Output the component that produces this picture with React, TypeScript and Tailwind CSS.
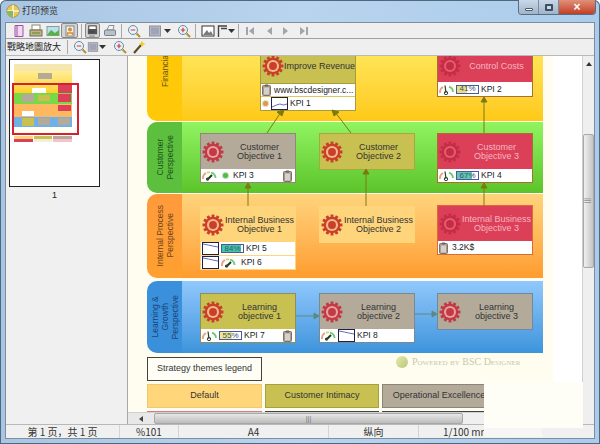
import type { ReactNode } from 'react';

const SANS = 'font-["Liberation_Sans",Arial,sans-serif]';

function Gear({ tone = 'orange' }: { tone?: 'orange' | 'crimson' | 'red' }) {
  const main = tone === 'orange' ? '#c8402a' : tone === 'crimson' ? '#c23a44' : '#c42e44';
  const ring = tone === 'orange' ? '#f7b98a' : tone === 'crimson' ? '#e8a0a0' : '#e85a70';
  const teeth = Array.from({ length: 12 }, (_, i) => i * 30);
  return (
    <svg width="22" height="22" viewBox="0 0 24 24" className="shrink-0">
      {teeth.map((a) => (
        <rect key={a} x="10.4" y="0.6" width="3.2" height="5" fill={main} transform={`rotate(${a} 12 12)`} />
      ))}
      <circle cx="12" cy="12" r="9" fill={main} />
      <circle cx="12" cy="12" r="6.6" fill={ring} />
      <circle cx="12" cy="12" r="4.3" fill={main} />
    </svg>
  );
}

function Clip() {
  return (
    <svg width="9" height="12" viewBox="0 0 9 12" className="shrink-0">
      <rect x="0.5" y="1.5" width="8" height="10" rx="1" fill="#a89c90" stroke="#7c7468" />
      <rect x="2" y="3.5" width="5" height="7" fill="#d8d0c8" />
      <rect x="3" y="0.5" width="3" height="2" fill="#6c6458" />
    </svg>
  );
}

function Gauge() {
  return (
    <svg width="15" height="11" viewBox="0 0 15 11" className="shrink-0">
      <path d="M1 9 A6 6 0 0 1 4 3" fill="none" stroke="#e8a080" strokeWidth="1.8" />
      <path d="M5 2.6 A6 6 0 0 1 8 2.4" fill="none" stroke="#d8d060" strokeWidth="1.8" />
      <path d="M9 2.6 A6 6 0 0 1 13.6 8" fill="none" stroke="#70c870" strokeWidth="1.8" />
      <path d="M5 10 L10 5" stroke="#1c3a20" strokeWidth="2" />
      <circle cx="5.5" cy="9" r="1.6" fill="#2c4a30" />
    </svg>
  );
}

function Needle() {
  return (
    <svg width="15" height="11" viewBox="0 0 15 11" className="shrink-0">
      <path d="M1 9 A6 6 0 0 1 4 3" fill="none" stroke="#e8a080" strokeWidth="1.8" />
      <path d="M10 2.6 A6 6 0 0 1 14 8" fill="none" stroke="#70c870" strokeWidth="1.8" />
      <path d="M7 9 L6 1.5" stroke="#2c3a20" strokeWidth="1.2" />
      <circle cx="7" cy="9" r="1.7" fill="none" stroke="#2c4a30" />
    </svg>
  );
}

function Dot({ color }: { color: string }) {
  return <span className={`size-[7px] shrink-0 rounded-full border border-white/60 ${color}`} />;
}

function Spark({ w = 'w-[17px]', down = false }: { w?: string; down?: boolean }) {
  return (
    <span className={`block h-[13px] shrink-0 border border-[#20204a] bg-white ${w}`}>
      <svg viewBox="0 0 17 11" preserveAspectRatio="none" className="size-full">
        <path
          d={down ? 'M0 1 L6 2 L11 3 L17 4' : 'M0 9 L5 7 L9 6 L13 7 L17 6'}
          fill="none"
          stroke="#5a60b8"
          strokeWidth="1"
        />
      </svg>
    </span>
  );
}

function Pct({ v, fill }: { v: string; fill: string }) {
  return (
    <span className="relative flex h-[9px] w-[23px] shrink-0 items-center justify-center border border-[#4a58a0] bg-white text-[8px] leading-none text-[#40506a]">
      <span className={`absolute inset-y-0 left-0 ${fill}`} />
      <span className="relative">{v}</span>
    </span>
  );
}

function Row({ children, h = 'h-[13px]' }: { children: ReactNode; h?: string }) {
  return (
    <div className={`flex items-center gap-[2px] bg-white pl-[1px] text-[8.5px] text-[#222] ${h}`}>{children}</div>
  );
}

function Node({
  place,
  tone,
  gear = 'orange',
  title,
  children,
  border,
  head = 'h-[35px]',
}: {
  place: string;
  tone: string;
  gear?: 'orange' | 'crimson' | 'red';
  title: ReactNode;
  children?: ReactNode;
  border: string;
  head?: string;
}) {
  return (
    <div className={`absolute w-[96px] border ${place} ${border}`}>
      <div className={`flex pl-[1px] ${head} ${tone}`}>
        <div className="flex h-full max-h-[35px] items-center">
          <Gear tone={gear} />
        </div>
        <div className="flex h-full max-h-[35px] flex-1 items-center justify-center text-center text-[9px] leading-[9px] whitespace-nowrap">
          <span>{title}</span>
        </div>
      </div>
      {children}
    </div>
  );
}

function Lane({
  h,
  tab,
  body,
  title,
  label = '',
  children,
}: {
  h: string;
  tab: string;
  body: string;
  title: ReactNode;
  label?: string;
  children?: ReactNode;
}) {
  return (
    <div className={`relative flex w-[396px] overflow-hidden ${h}`}>
      <div className={`flex w-[35px] shrink-0 items-center justify-center ${tab}`}>
        <div className={`rotate-180 text-center text-[8.5px] leading-[10px] [writing-mode:vertical-rl] ${label}`}>{title}</div>
      </div>
      <div className={`flex-1 ${body}`} />
      {children}
    </div>
  );
}

function Diagram() {
  const RED = 'bg-[#dc3f58] text-[#f6b6c0]';
  const OLIVE = 'bg-[#c9c052] text-[#333]';
  const TAUPE = 'bg-[#b4aa9a] text-[#333]';
  const PEACH = 'bg-[#ffd57c] text-[#333]';
  return (
    <div className="relative flex w-[396px] flex-col gap-[1px]">
      <Lane
        h="h-[65px] rounded-bl-[10px]"
        tab="bg-[#ffc808] !items-start"
        label="text-[#6a5210] mt-[-3px]"
        body="bg-gradient-to-b from-[#ffe454] to-[#ffc912]"
        title="Financial"
      >
        <Node
          place="left-[113px] top-[-2px]"
          head="h-[28px] [&>div]:h-[22px]"
          tone={OLIVE}
          border="border-[#a89a40]"
          title="Improve Revenue"
        >
          <Row h="h-[13px] border-t border-[#a89a40]"><Clip /><span className="ml-[1px] whitespace-nowrap">www.bscdesigner.c...</span></Row>
          <Row h="h-[14px] border-t border-[#d8c860]"><Dot color="bg-[#d89a50]" /><Spark /><span>KPI 1</span></Row>
        </Node>
        <Node
          place="left-[290px] top-[-2px]"
          head="h-[27px] [&>div]:h-[22px]"
          tone={RED}
          gear="red"
          border="border-[#a8702c]"
          title="Control Costs"
        >
          <Row h="h-[14px]"><Needle /><Pct v="41%" fill="w-[10px] bg-[#e8e080]" /><span>KPI 2</span></Row>
        </Node>
      </Lane>
      <Lane
        h="h-[71px] rounded-l-[10px]"
        tab="bg-[#5cbf3e]"
        label="text-[#1c541c]"
        body="bg-gradient-to-b from-[#90f460] to-[#5cc42a]"
        title={<>Customer<br />Perspective</>}
      >
        <Node place="left-[53px] top-[11px]" tone={TAUPE} gear="crimson" border="border-[#908878]" title={<>Customer<br />Objective 1</>}>
          <Row><Gauge /><span className="w-[1px]" /><Dot color="bg-[#58b848]" /><span className="ml-[2px] flex-1">KPI 3</span><Clip /><span className="w-[1px]" /></Row>
        </Node>
        <Node place="left-[172px] top-[11px]" tone={OLIVE} border="border-[#a8a840]" title={<>Customer<br />Objective 2</>} />
        <Node place="left-[290px] top-[11px]" tone={RED} gear="red" border="border-[#a8702c]" title={<>Customer<br />Objective 3</>}>
          <Row><Needle /><Pct v="67%" fill="w-[15px] bg-[#60c8b0]" /><span>KPI 4</span></Row>
        </Node>
      </Lane>
      <Lane
        h="h-[84px] rounded-l-[10px]"
        tab="bg-gradient-to-b from-[#ff9a3c] to-[#ffa030]"
        label="text-[#6c4418]"
        body="bg-gradient-to-b from-[#ffd47c] to-[#ff9c2c]"
        title={<>Internal Process<br />Perspective</>}
      >
        <Node place="left-[53px] top-[12px]" tone={PEACH} border="border-[#ffd57c]" title={<>Internal Business<br />Objective 1</>}>
          <Row><Spark down /><Pct v="84%" fill="w-[19px] bg-[#40c8a8]" /><span>KPI 5</span></Row>
          <div className="h-[1px] bg-[#ffd57c]" />
          <Row><Spark down /><Gauge /><span className="ml-[3px]">KPI 6</span></Row>
        </Node>
        <Node place="left-[172px] top-[12px]" tone={PEACH} border="border-[#ffd57c]" title={<>Internal Business<br />Objective 2</>} />
        <Node place="left-[290px] top-[11px]" tone={RED} gear="red" border="border-[#d86a3c]" title={<>Internal Business<br />Objective 3</>}>
          <Row><Clip /><span className="ml-[2px]">3.2K$</span></Row>
        </Node>
      </Lane>
      <div className="h-[1px]" />
      <Lane
        h="h-[72px] rounded-l-[10px]"
        tab="bg-[#3a90da]"
        label="text-[#1c4478]"
        body="bg-gradient-to-b from-[#90c8fc] to-[#3c94dc]"
        title={<>Learning &amp;<br />Growth<br />Perspective</>}
      >
        <Node place="left-[53px] top-[12px]" tone={OLIVE} border="border-[#8c9060]" title={<>Learning<br />objective 1</>}>
          <Row><Needle /><Pct v="55%" fill="w-[12px] bg-[#f0e890]" /><span className="flex-1">KPI 7</span><Clip /><span className="w-[1px]" /></Row>
        </Node>
        <Node place="left-[172px] top-[12px]" tone={TAUPE} gear="crimson" border="border-[#7c8890]" title={<>Learning<br />objective 2</>}>
          <Row><Gauge /><Spark down /><span>KPI 8</span></Row>
        </Node>
        <Node place="left-[290px] top-[12px]" tone={TAUPE} gear="crimson" border="border-[#6c8aa0]" title={<>Learning<br />objective 3</>} />
      </Lane>
      <svg viewBox="0 0 396 296" className="pointer-events-none absolute left-0 top-0 h-[296px] w-[396px]">
        <g stroke="#7c7a10" strokeWidth="1" fill="#7c7a10">
          <path d="M120 77 L134 56" /><path d="M137 54 L130 56 L135 60 Z" />
          <path d="M204 77 L188 56" /><path d="M185 54 L192 56 L187 60 Z" />
          <path d="M337 77 L337 44" /><path d="M337 41 L334 46 L340 46 Z" />
          <path d="M101 150 L101 130" /><path d="M101 127 L98 132 L104 132 Z" />
          <path d="M219 150 L219 116" /><path d="M219 113 L216 118 L222 118 Z" />
          <path d="M337 150 L337 130" /><path d="M337 127 L334 132 L340 132 Z" />
        </g>
        <g stroke="#5c8a80" strokeWidth="1" fill="#5c8a80">
          <path d="M149 260 L168 260" /><path d="M172 260 L167 257 L167 263 Z" />
          <path d="M267 258 L286 258" /><path d="M290 258 L285 255 L285 261 Z" />
        </g>
      </svg>
    </div>
  );
}

function Legend() {
  const cell = 'flex h-[24px] items-center justify-center text-[9px] text-[#333] border';
  return (
    <div className="mt-[4px] flex w-[396px] flex-col gap-[3px]">
      <div className={`${cell} w-[115px] border-[#44443c] bg-[#fffef6]`}>Strategy themes legend</div>
      <div className="flex gap-[3px]">
        <div className={`${cell} w-[115px] border-[#f0c870] bg-[#ffd77a]`}>Default</div>
        <div className={`${cell} w-[114px] border-[#a8a040] bg-[#c9c052]`}>Customer Intimacy</div>
        <div className={`${cell} w-[114px] border-[#8c8474] bg-[#b4aa9a]`}>Operational Excellence</div>
      </div>
      <div className="flex gap-[3px]">
        <div className="h-[24px] w-[115px] bg-[#d87888]" />
        <div className="h-[24px] w-[114px] border-t border-[#444] bg-[#eee]" />
        <div className="h-[24px] w-[114px] border-t border-[#444] bg-[#eee]" />
      </div>
    </div>
  );
}

function Thumb() {
  return (
    <div className="relative h-[128px] w-[91px] border border-[#222] bg-white pl-[4px] pt-[4px]">
      <div className="flex w-[58px] flex-col">
        <div className="h-[7px] bg-[#f4e8b0]" />
        <div className="relative h-[22px] bg-gradient-to-b from-[#ffee90] to-[#ffd020]">
          <span className="absolute left-[24px] top-[2px] h-[6px] w-[14px] bg-[#b4aa9a]" />
          <span className="absolute left-[18px] top-[17px] h-[5px] w-[14px] bg-white" />
          <span className="absolute left-[44px] top-[14px] h-[8px] w-[14px] bg-[#dc3f58]" />
        </div>
        <div className="relative h-[11px] bg-[#78d848]">
          <span className="absolute left-[8px] top-[1px] h-[8px] w-[12px] bg-[#b4aa9a]" />
          <span className="absolute left-[24px] top-[2px] h-[6px] w-[12px] bg-[#c9c052]" />
          <span className="absolute left-[44px] top-[1px] h-[8px] w-[13px] bg-[#dc3f58]" />
        </div>
        <div className="relative h-[13px] bg-[#ffb860]">
          <span className="absolute left-[8px] top-[7px] h-[5px] w-[12px] bg-white" />
          <span className="absolute left-[44px] top-[1px] h-[6px] w-[13px] bg-[#dc3f58]" />
        </div>
        <div className="relative h-[10px] bg-[#70b0e8]">
          <span className="absolute left-[8px] top-[1px] h-[8px] w-[12px] bg-[#c9c052]" />
          <span className="absolute left-[24px] top-[1px] h-[7px] w-[12px] bg-[#b4aa9a]" />
          <span className="absolute left-[44px] top-[1px] h-[7px] w-[12px] bg-[#b4aa9a]" />
        </div>
        <div className="h-[9px] bg-[#fffef0]" />
        <div className="flex h-[3px] gap-[1px]">
          <span className="flex-1 bg-[#ffd77a]" /><span className="flex-1 bg-[#c9c052]" /><span className="flex-1 bg-[#b4aa9a]" />
        </div>
        <div className="flex h-[3px] gap-[1px]">
          <span className="flex-1 bg-[#dc3f58]" /><span className="flex-1 bg-[#f0f0d8]" /><span className="flex-1 bg-[#f8c0c8]" />
        </div>
      </div>
      <div className="absolute left-[2px] top-[23px] h-[52px] w-[67px] border-2 border-[#d42030]" />
    </div>
  );
}

function Sep() {
  return <span className="mx-[3px] h-[14px] w-[1px] bg-[#a8a8a8]" />;
}

function Tool({ children, on = false, w = 'w-[17px]' }: { children: ReactNode; on?: boolean; w?: string }) {
  return (
    <span className={`flex h-[15px] shrink-0 items-center justify-center rounded-[2px] ${w} ${on ? 'border border-[#8a8a8a] bg-[#d4d4d4]' : ''}`}>
      {children}
    </span>
  );
}

function Ico({ children, w = 14 }: { children: ReactNode; w?: number }) {
  return (
    <svg width={w} height="14" viewBox={`0 0 ${w} 14`}>
      {children}
    </svg>
  );
}

function Zoom({ plus = false }: { plus?: boolean }) {
  return (
    <Ico>
      <circle cx="6" cy="6" r="4.5" fill="#e8f0f8" stroke="#6a8aa8" />
      <path d="M3.8 6 H8.2" stroke="#c84030" strokeWidth="1.2" />
      {plus && <path d="M6 3.8 V8.2" stroke="#c84030" strokeWidth="1.2" />}
      <path d="M9.5 9.5 L13 13" stroke="#b8902c" strokeWidth="2" />
    </Ico>
  );
}

function Square() {
  return (
    <Ico>
      <rect x="1.5" y="2" width="11" height="10" fill="#b8bcc8" stroke="#8c90a0" />
      <rect x="3" y="3.5" width="8" height="7" fill="#a0a4b4" />
    </Ico>
  );
}

function Caret() {
  return (
    <svg width="7" height="4" viewBox="0 0 7 4" className="shrink-0">
      <path d="M0 0 H7 L3.5 4 Z" fill="#333" />
    </svg>
  );
}

function Nav({ d, bar }: { d: string; bar?: number }) {
  return (
    <Ico w={10}>
      {bar !== undefined && <rect x={bar} y="3" width="2" height="8" fill="#a0a4ac" />}
      <path d={d} fill="#a0a4ac" />
    </Ico>
  );
}

function ToolbarTop() {
  return (
    <div className="flex h-[16px] items-center border-b border-[#a0a0a0] bg-[#efefef] pl-[4px]">
      <Tool>
        <Ico><path d="M3 1.5 H11 V12.5 H3 Z" fill="#f0d8f0" stroke="#a050a8" /><path d="M5 1.5 V12.5" stroke="#a050a8" /></Ico>
      </Tool>
      <Tool>
        <Ico><rect x="3" y="1" width="8" height="5" fill="#fff" stroke="#8a8a70" /><rect x="1" y="6" width="12" height="6" fill="#c8b078" stroke="#68705c" /><path d="M3 9 H11" stroke="#4a8a40" /></Ico>
      </Tool>
      <Tool>
        <Ico><rect x="1" y="2.5" width="12" height="9" fill="#b8e0f0" stroke="#88a088" /><path d="M1 11 L5 6 L9 9 L13 6 V11.5 H1 Z" fill="#58b048" /></Ico>
      </Tool>
      <Tool on>
        <Ico><rect x="3" y="2" width="8" height="10" fill="#f8f0d8" stroke="#7888a0" /><circle cx="7" cy="5.5" r="2" fill="#d88a30" /><path d="M4.5 11 V9 H9.5 V11" fill="none" stroke="#d88a30" strokeWidth="1.5" /></Ico>
      </Tool>
      <Sep />
      <Tool on w="w-[15px]">
        <Ico><rect x="3" y="1.5" width="8" height="4" fill="#fff" stroke="#333" /><rect x="2" y="5.5" width="10" height="5" fill="#555" /><path d="M4 8 H10 M4 12.5 H10" stroke="#222" strokeDasharray="1 1" /></Ico>
      </Tool>
      <span className="w-[1px]" />
      <Tool>
        <Ico><path d="M4 6 L6 1.5 H11 L10 6 Z" fill="#f4f4f4" stroke="#8a9098" /><rect x="1.5" y="6" width="11" height="5.5" rx="1" fill="#b8c0c8" stroke="#78828c" /></Ico>
      </Tool>
      <Sep />
      <Tool><Zoom /></Tool>
      <span className="w-[4px]" />
      <Tool><Square /></Tool>
      <span className="w-[1px]" />
      <Caret />
      <span className="w-[4px]" />
      <Tool><Zoom plus /></Tool>
      <Sep />
      <Tool>
        <Ico><rect x="1" y="2" width="12" height="10" fill="#fff" stroke="#333" /><path d="M2 11 L6 6 L8 9 L10 7 L12 11 Z" fill="#7a7a7a" /></Ico>
      </Tool>
      <Tool w="w-[12px]">
        <Ico w={11}><path d="M1.5 13 V2 H10 M4 4.5 H10" fill="none" stroke="#444" strokeWidth="1.4" /></Ico>
      </Tool>
      <Caret />
      <Sep />
      <span className="w-[3px]" />
      <Nav bar={1} d="M9 3 V11 L4 7 Z" />
      <span className="w-[9px]" />
      <Nav d="M8 3 V11 L3 7 Z" />
      <span className="w-[6px]" />
      <Nav d="M3 3 V11 L8 7 Z" />
      <span className="w-[9px]" />
      <Nav bar={7} d="M1 3 V11 L6 7 Z" />
    </div>
  );
}

function ToolbarBottom() {
  return (
    <div className="flex h-[17px] items-center border-b border-[#b8b8b8] bg-[#efefef] pl-[1px] font-['Noto_Sans_CJK_TC','Noto_Sans_CJK_SC',sans-serif] text-[9px] whitespace-nowrap text-[#222]">
      <span className="w-[57px]">戰略地圖放大</span>
      <Sep />
      <span className="w-[2px]" />
      <Tool w="w-[14px]"><Zoom /></Tool>
      <Tool w="w-[12px]"><Square /></Tool>
      <Caret />
      <span className="w-[6px]" />
      <Tool w="w-[15px]"><Zoom plus /></Tool>
      <span className="w-[3px]" />
      <Tool>
        <Ico><path d="M2 13 L9 5" stroke="#5a4a20" strokeWidth="2" /><path d="M10 0.5 L11 3 L13.5 4 L11 5 L10 7.5 L9 5 L6.5 4 L9 3 Z" fill="#f0c820" /></Ico>
      </Tool>
    </div>
  );
}

function HScroll() {
  return (
    <div className="flex h-[12px] shrink-0 items-center border-t border-[#d0d0d0] bg-[#e8e8e8]">
      <span className="flex w-[26px] justify-center">
        <svg width="4" height="6" viewBox="0 0 4 6"><path d="M4 0 V6 L0 3 Z" fill="#444" /></svg>
      </span>
      <div className="flex h-[11px] w-[309px] items-center justify-center rounded-[2px] border border-[#a8a8a8] bg-gradient-to-b from-[#e8e8e8] to-[#bcbcbc]">
        <span className="text-[7px] leading-none text-[#777]">|||</span>
      </div>
      <div className="h-full flex-1 bg-[#f0f0f0]" />
    </div>
  );
}

function VScroll() {
  return (
    <div className="flex w-[12px] shrink-0 flex-col items-center border-l border-[#d0d0d0] bg-[#efefef]">
      <svg width="6" height="4" viewBox="0 0 6 4" className="mt-[6px]"><path d="M0 4 H6 L3 0 Z" fill="#333" /></svg>
      <div className="mt-[68px] flex h-[134px] w-[11px] items-center justify-center rounded-[2px] border border-[#a8a8a8] bg-gradient-to-r from-[#f0f0f0] to-[#c4c4c4]">
        <span className="text-[7px] leading-none text-[#777] [writing-mode:vertical-rl]">|||</span>
      </div>
    </div>
  );
}

function Status() {
  const cell = 'flex h-full items-center justify-center border-r border-[#d4d4d4]';
  return (
    <div className="flex h-[14px] shrink-0 items-center border-t border-[#b8b8b8] bg-[#f0f0f0] font-['Noto_Sans_CJK_SC',sans-serif] text-[10px] whitespace-nowrap text-[#333]">
      <div className={`${cell} w-[114px]`}>第 1 页，共 1 页</div>
      <div className={`${cell} w-[59px]`}>%101</div>
      <div className={`${cell} w-[150px]`}>A4</div>
      <div className={`${cell} w-[90px]`}>纵向</div>
      <div className="flex h-full flex-1 items-center pl-[24px]">1/100 mm</div>
    </div>
  );
}

function TitleBar() {
  return (
    <div className="relative flex h-[22px] shrink-0 items-center pl-[6px]">
      <svg width="14" height="14" viewBox="0 0 14 14">
        <circle cx="7" cy="7" r="6.2" fill="#e8c850" stroke="#a89050" />
        <path d="M7 1 V13 M1 7 H13" stroke="#f8f4d8" strokeWidth="1.6" />
        <path d="M1 7 A6 6 0 0 0 7 13 V7 Z" fill="#88b860" />
      </svg>
      <span className="ml-[2px] font-['Noto_Sans_CJK_SC',sans-serif] text-[9px] text-[#333]">打印预览</span>
      <div className="absolute right-[4px] top-0 flex h-[15px] overflow-hidden rounded-b-[4px] border border-t-0 border-[#5a6c80]">
        <div className="flex w-[20px] items-center justify-center border-r border-[#7a8ca0] bg-gradient-to-b from-[#c8d8e8] to-[#a0b4c8]">
          <span className="mt-[4px] h-[3px] w-[8px] rounded-[1px] border border-[#4a5a6c] bg-white" />
        </div>
        <div className="flex w-[20px] items-center justify-center border-r border-[#7a8ca0] bg-gradient-to-b from-[#c8d8e8] to-[#a0b4c8]">
          <span className="h-[7px] w-[8px] rounded-[1px] border-2 border-[#3e4e60] bg-[#c8d8e8]" />
        </div>
        <div className="flex w-[36px] items-center justify-center bg-gradient-to-b from-[#e09078] to-[#c03c24] text-[12px] leading-none font-bold text-white">
          ×
        </div>
      </div>
    </div>
  );
}

export default function App() {
  return (
    <div className={`relative flex h-[444px] w-[600px] flex-col overflow-hidden rounded-t-[6px] bg-gradient-to-r from-[#a8c6e4] via-[#b8d4ee] to-[#aaccec] shadow-[inset_0_0_0_1px_#50687e] ${SANS}`}>
      <TitleBar />
      <div className="mx-[5px] mb-[5px] flex min-h-0 flex-1 flex-col border border-[#7e8e9e]">
        <ToolbarTop />
        <ToolbarBottom />
        <div className="flex min-h-0 flex-1">
          <div className="flex w-[122px] shrink-0 flex-col border-r border-[#a8a8a8] bg-[#f0f0f0] pl-[3px] pt-[3px]">
            <Thumb />
            <span className="mt-[1px] w-[91px] text-center text-[9px] leading-[14px] text-[#222]">1</span>
          </div>
          <div className="flex min-w-0 flex-1 flex-col">
            <div className="relative min-h-0 flex-1 overflow-hidden bg-white">
              <div className="h-full w-[425px] bg-[#fffdf0] pl-[19px]">
                <Diagram />
                <Legend />
              </div>
              <div className="absolute left-[268px] top-[298px] flex items-center gap-[4px]">
                <span className="size-[12px] rounded-full bg-gradient-to-br from-[#e8e8b0] to-[#b8c878]" />
                <span className="font-['Liberation_Serif',serif] text-[10px] whitespace-nowrap text-[#c8c8a8] [font-variant:small-caps]">
                  Powered by BSC Designer
                </span>
              </div>
            </div>
            <HScroll />
          </div>
          <VScroll />
        </div>
        <Status />
      </div>
      {/* watermark patch left over the bottom right of the screenshot */}
      <div className="absolute left-[484px] top-[382px] h-[46px] w-[99px] bg-[#fffef6]" />
      <div className="absolute left-[484px] top-[428px] h-[9px] w-[58px] bg-[#f6f6f4]" />
    </div>
  );
}
